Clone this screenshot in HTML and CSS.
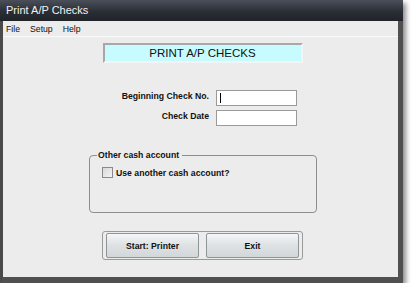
FILE: index.html
```html
<!DOCTYPE html>
<html>
  <head>
    <meta charset="utf-8">
    <meta name="viewport" content="width=device-width">
    <title>Print A/P Checks</title>
    <link rel="stylesheet" href="styles.css">
  </head>
  <body>
    <div class="window">
      <div class="titlebar">Print A/P Checks</div>
      <div class="menubar">
        <span>File</span>
        <span>Setup</span>
        <span>Help</span>
      </div>
      <div class="content">
        <div class="banner">PRINT A/P CHECKS</div>
        <div class="form">
          <label>Beginning Check No.</label>
          <div class="input caret"></div>
          <label>Check Date</label>
          <div class="input"></div>
        </div>
        <fieldset class="group">
          <legend>Other cash account</legend>
          <div class="check"><span class="box"></span>Use another cash account?</div>
        </fieldset>
        <div class="buttons">
          <button>Start: Printer</button>
          <button>Exit</button>
        </div>
      </div>
    </div>
  </body>
</html>
```

FILE: styles.css
```css
* {
  box-sizing: border-box;
  margin: 0;
  padding: 0;
}
body {
  background: #fff;
  font-family: "Liberation Sans", Arial, sans-serif;
}
.window {
  width: 403px;
  height: 283px;
  background: #4d4d4d;
  border-left: 3px solid #4a4a4a;
  border-right: 5px solid #505050;
  border-bottom: 6px solid #505050;
  box-shadow: 3px 3px 5px rgba(0, 0, 0, 0.45);
  display: flex;
  flex-direction: column;
}
.titlebar {
  height: 21px;
  margin: 0 -5px 0 -3px;
  padding-left: 6px;
  background: linear-gradient(#4a4f59, #2a2e35 55%, #202328);
  color: #f2f2f2;
  font-size: 11px;
  line-height: 21px;
  border-radius: 0 5px 0 0;
}
.menubar {
  height: 16px;
  background: #ececec;
  border-bottom: 1px solid #fafafa;
  display: flex;
  gap: 10px;
  padding-left: 3px;
  font-size: 8.7px;
  line-height: 16px;
  color: #111;
}
.content {
  flex: 1;
  background: #ececec;
  display: flex;
  flex-direction: column;
  align-items: center;
  padding-top: 6px;
}
.banner {
  width: 200px;
  height: 20px;
  margin-left: 4px;
  background: #c6fbff;
  border: 2px solid #a8a8a8;
  border-right-color: #f4f4f4;
  border-bottom-color: #f4f4f4;
  text-align: center;
  font-size: 11.5px;
  line-height: 16px;
  color: #111;
}
.form {
  align-self: flex-start;
  margin: 27px 0 0 96px;
  display: grid;
  grid-template-columns: 110px 81px;
  column-gap: 7px;
  row-gap: 4px;
  align-items: center;
}
.form label {
  text-align: right;
  font-size: 8.7px;
  font-weight: bold;
  color: #111;
  position: relative;
  top: -2px;
}
.input {
  height: 16px;
  background: #fff;
  border: 1px solid #9a9a9a;
  position: relative;
}
.caret::after {
  content: "";
  position: absolute;
  left: 3px;
  top: 2px;
  width: 1px;
  height: 10px;
  background: #000;
}
.group {
  margin-top: 24px;
  margin-left: 5px;
  width: 228px;
  height: 63px;
  border: 1px solid #8e8e8e;
  border-radius: 4px;
  padding: 0 0 0 12px;
}
.group legend {
  margin-left: -5px;
  padding: 0 3px 0 1px;
  font-size: 8.7px;
  font-weight: bold;
  color: #111;
}
.check {
  margin-top: 7px;
  display: flex;
  align-items: center;
  gap: 3px;
  font-size: 8.7px;
  font-weight: bold;
  color: #111;
}
.box {
  width: 11px;
  height: 11px;
  border: 1px solid #8a8a8a;
  background: linear-gradient(135deg, #d8d8d8, #f4f4f4);
}
.buttons {
  margin-top: 18px;
  margin-left: 4px;
  width: 201px;
  height: 29px;
  border: 1px solid #9a9a9a;
  border-radius: 3px;
  display: flex;
  gap: 7px;
  padding: 1px 3px;
}
.buttons button {
  flex: 1;
  background: linear-gradient(#f4f6f7, #dde1e3 50%, #d2d7da);
  border: 1px solid #8d9599;
  border-radius: 2px;
  font-family: "Liberation Sans", Arial, sans-serif;
  font-size: 8.7px;
  font-weight: bold;
  color: #111;
}
```
